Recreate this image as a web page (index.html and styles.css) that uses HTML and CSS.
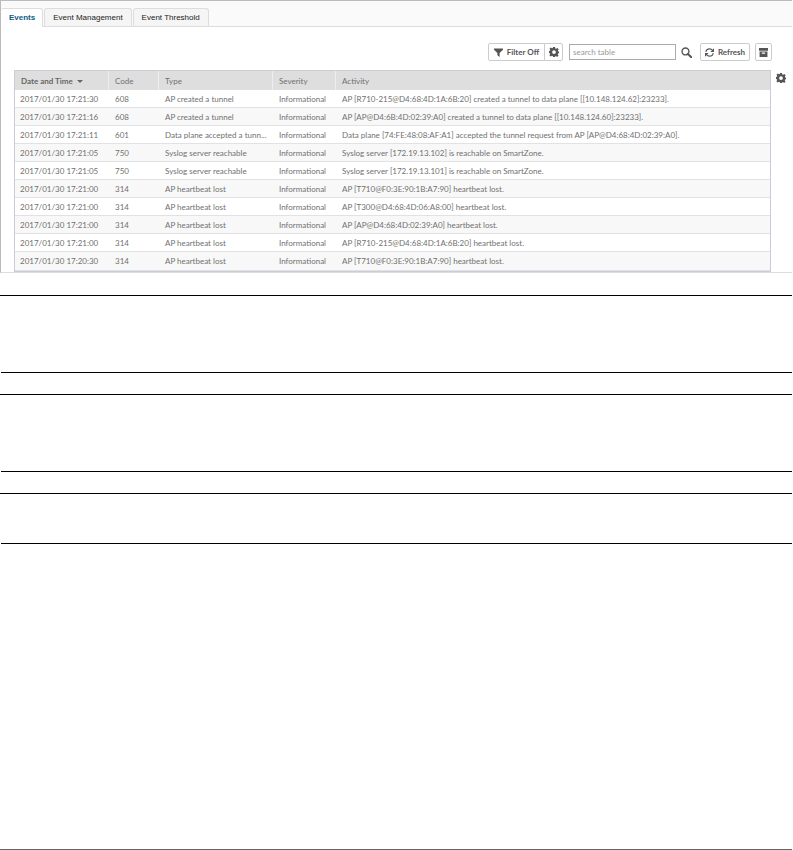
FILE: index.html
```html
<!DOCTYPE html>
<html lang="en">
<head>
  <meta charset="UTF-8">
  <meta name="viewport" content="width=device-width, initial-scale=1.0">
  <title>Events</title>
  <link rel="stylesheet" href="styles.css">
</head>
<body>

<!-- shared gear icon -->
<svg class="sprite" width="0" height="0" aria-hidden="true">
  <symbol id="gear" viewBox="0 0 16 16">
    <path fill-rule="evenodd" d="M6.500 0h3l.5 2.300 1.400.6L13.400 1.600l2.100 2.100-1.300 2 .5 1.300 1.300.3v2.700l-1.500.5-.5 1.200 1.200 2-2.100 2.100-2-1.300-1.200.5L9.500 16h-3L6 14.500l-1.300-.5-2 1.300-2.100-2.100 1.300-2L1.400 10 0 9.500v-3L1.500 6l.5-1.300L.8 2.800 2.900.7l1.900 1.300L6 1.500zM8 5a3 3 0 1 0 0 6 3 3 0 0 0 0-6z"/>
  </symbol>
</svg>

<main class="panel">
  <nav class="tabs">
    <a class="tab active" href="#events">Events</a>
    <a class="tab" href="#management">Event Management</a>
    <a class="tab" href="#threshold">Event Threshold</a>
  </nav>

  <div class="toolbar">
    <div class="btn-group">
      <button type="button" class="btn filter">
        <svg class="icon" viewBox="0 0 16 16"><path d="M0 1h16v2l-6 6v7l-4-3V9L0 3z"/></svg>
        Filter Off
      </button>
      <button type="button" class="btn square" aria-label="Filter settings">
        <svg class="icon gear"><use href="#gear"/></svg>
      </button>
    </div>
    <input type="text" class="search" placeholder="search table" aria-label="Search table">
    <button type="button" class="search-button" aria-label="Search">
      <svg class="icon large" viewBox="0 0 16 16"><circle cx="6.500" cy="6.500" r="5" fill="none" stroke="currentColor" stroke-width="2"/><path d="M10 10l5 5" stroke="currentColor" stroke-width="3" stroke-linecap="round"/></svg>
    </button>
    <button type="button" class="btn refresh">
      <svg class="icon" viewBox="0 0 16 16"><path d="M1.500 7C2 3.500 5 1.500 8 1.500c2.500 0 4.500 1.300 5.500 3M14.500 9c-.5 3.500-3.500 5.500-6.500 5.500-2.500 0-4.500-1.300-5.500-3" fill="none" stroke="currentColor" stroke-width="2"/><path d="M16 .5V7H9.500zM0 15.500V9h6.500z"/></svg>
      Refresh
    </button>
    <button type="button" class="btn square" aria-label="Archive">
      <svg class="icon" viewBox="0 0 16 16"><path fill-rule="evenodd" d="M0 0h16v5H0zM1 6h14v10H1zM5 8v2h6V8z"/></svg>
    </button>
  </div>

  <div class="table-area">
    <table class="events">
      <colgroup>
        <col class="col-date">
        <col class="col-code">
        <col class="col-type">
        <col class="col-severity">
        <col>
      </colgroup>
      <thead>
        <tr><th class="sorted">Date and Time <span class="caret"></span></th><th>Code</th><th>Type</th><th>Severity</th><th>Activity</th></tr>
      </thead>
      <tbody>
        <tr><td>2017/01/30 17:21:30</td><td>608</td><td>AP created a tunnel</td><td>Informational</td><td>AP [R710-215@D4:68:4D:1A:6B:20] created a tunnel to data plane [[10.148.124.62]:23233].</td></tr>
        <tr><td>2017/01/30 17:21:16</td><td>608</td><td>AP created a tunnel</td><td>Informational</td><td>AP [AP@D4:6B:4D:02:39:A0] created a tunnel to data plane [[10.148.124.60]:23233].</td></tr>
        <tr><td>2017/01/30 17:21:11</td><td>601</td><td>Data plane accepted a tunn...</td><td>Informational</td><td>Data plane [74:FE:48:08:AF:A1] accepted the tunnel request from AP [AP@D4:68:4D:02:39:A0].</td></tr>
        <tr><td>2017/01/30 17:21:05</td><td>750</td><td>Syslog server reachable</td><td>Informational</td><td>Syslog server [172.19.13.102] is reachable on SmartZone.</td></tr>
        <tr><td>2017/01/30 17:21:05</td><td>750</td><td>Syslog server reachable</td><td>Informational</td><td>Syslog server [172.19.13.101] is reachable on SmartZone.</td></tr>
        <tr><td>2017/01/30 17:21:00</td><td>314</td><td>AP heartbeat lost</td><td>Informational</td><td>AP [T710@F0:3E:90:1B:A7:90] heartbeat lost.</td></tr>
        <tr><td>2017/01/30 17:21:00</td><td>314</td><td>AP heartbeat lost</td><td>Informational</td><td>AP [T300@D4:68:4D:06:A8:00] heartbeat lost.</td></tr>
        <tr><td>2017/01/30 17:21:00</td><td>314</td><td>AP heartbeat lost</td><td>Informational</td><td>AP [AP@D4:68:4D:02:39:A0] heartbeat lost.</td></tr>
        <tr><td>2017/01/30 17:21:00</td><td>314</td><td>AP heartbeat lost</td><td>Informational</td><td>AP [R710-215@D4:68:4D:1A:6B:20] heartbeat lost.</td></tr>
        <tr><td>2017/01/30 17:20:30</td><td>314</td><td>AP heartbeat lost</td><td>Informational</td><td>AP [T710@F0:3E:90:1B:A7:90] heartbeat lost.</td></tr>
      </tbody>
    </table>
    <button type="button" class="table-settings" aria-label="Table settings">
      <svg class="icon gear"><use href="#gear"/></svg>
    </button>
  </div>
</main>

<section class="notes">
  <div class="note"><hr><hr></div>
  <div class="note"><hr><hr></div>
  <div class="note short"><hr><hr></div>
</section>

<footer class="footer"></footer>

</body>
</html>
```
FILE: styles.css
```css
* {
  box-sizing: border-box;
}

body {
  margin: 0;
  min-height: 100vh;
  display: flex;
  flex-direction: column;
  padding-right: 1px;
  background: #fff;
  font-family: Lato, sans-serif;
  font-size: 8px;
  color: #707070;
}

button {
  font: inherit;
  color: #555;
  cursor: pointer;
}

.sprite {
  position: absolute;
}

.panel {
  border: 1px solid #bbb;
  border-right: none;
  border-bottom-color: #ddd;
}

/* Tabs */
.tabs {
  display: flex;
  gap: 1px;
  padding-top: 7px;
  background: #fafafa;
  border-bottom: 1px solid #ddd;
}

.tab {
  height: 18px;
  padding: 0 8px;
  border: 1px solid #ddd;
  border-bottom: none;
  border-radius: 3px 3px 0 0;
  background: #f5f5f5;
  font-family: "Liberation Sans", Arial, sans-serif;
  line-height: 18px;
  color: #222;
  text-decoration: none;
}

.tab.active {
  height: 19px;
  margin-bottom: -1px;
  padding-right: 7px;
  border-left: none;
  background: #fff;
  font-weight: bold;
  color: #0d5c85;
}

/* Toolbar */
.toolbar {
  display: flex;
  align-items: center;
  justify-content: flex-end;
  gap: 5px;
  padding: 16px 20px 9px 13px;
}

.btn-group {
  display: flex;
  margin-right: 1px;
}

.btn {
  display: flex;
  align-items: center;
  justify-content: center;
  gap: 4px;
  height: 18px;
  padding: 0 3px;
  border: 1px solid #ccc;
  border-radius: 2px;
  background: #fff;
  font-weight: bold;
}

.filter {
  width: 57px;
  border-radius: 2px 0 0 2px;
}

.refresh {
  width: 50px;
  margin-left: 3px;
}

.square {
  width: 17px;
  padding: 0;
}

.btn-group .square {
  width: 19px;
  margin-left: -1px;
  border-radius: 0 2px 2px 0;
}

.icon {
  flex: none;
  width: 9px;
  height: 9px;
  fill: currentColor;
}

.icon.gear {
  width: 10px;
  height: 10px;
}

.icon.large {
  width: 11px;
  height: 11px;
}

.search {
  width: 107px;
  height: 16px;
  padding: 0 3px;
  border: 1px solid #aaa;
  border-radius: 0;
  background: #fff;
  font: inherit;
}

.search::placeholder {
  color: #999;
}

.search-button,
.table-settings {
  display: flex;
  padding: 0;
  border: none;
  background: none;
}

/* Events table */
.table-area {
  display: flex;
  align-items: flex-start;
  gap: 5px;
  padding: 0 6px 0 13px;
}

.table-settings {
  margin-top: 3px;
}

.events {
  flex: 1;
  min-width: 0;
  table-layout: fixed;
  border-collapse: separate;
  border-spacing: 0;
  border: 1px solid #ccccd6;
}

.events th,
.events td {
  height: 18px;
  padding: 0 6px;
  overflow: hidden;
  line-height: 16px;
  text-align: left;
  text-overflow: ellipsis;
  white-space: nowrap;
}

.events th {
  height: 19px;
  border-right: 1px solid #eee;
  background: #dedede;
  font-weight: normal;
}

.events th:last-child {
  border-right: none;
}

.events .sorted {
  font-weight: bold;
  color: #666;
}

.events td {
  border-bottom: 1px solid #e2e2e4;
}

.events tbody tr:nth-child(even) {
  background: #f8f8f8;
}

.events tbody tr:last-child td {
  height: 19px;
}

.events td:first-child {
  padding-left: 5px;
}

.events td:nth-child(3) {
  padding-right: 2px;
}

.col-date {
  width: 94px;
}

.col-code {
  width: 50px;
}

.col-type {
  width: 114px;
}

.col-severity {
  width: 63px;
}

.caret {
  display: inline-block;
  margin-left: 2px;
  border: 3px solid transparent;
  border-top-color: #666;
  border-bottom: none;
  vertical-align: middle;
}

/* Ruled note blocks */
.notes {
  display: flex;
  flex-direction: column;
  gap: 21px;
  padding-top: 22px;
}

.note {
  display: flex;
  flex-direction: column;
  justify-content: space-between;
  min-height: 78px;
}

.note.short {
  min-height: 51px;
}

.note hr {
  width: 100%;
  margin: 0;
  border: none;
  border-top: 1px solid #000;
}

.note hr:last-child {
  width: auto;
  margin-left: 1px;
}

.footer {
  margin-top: auto;
  border-top: 1px solid #666;
}
```
